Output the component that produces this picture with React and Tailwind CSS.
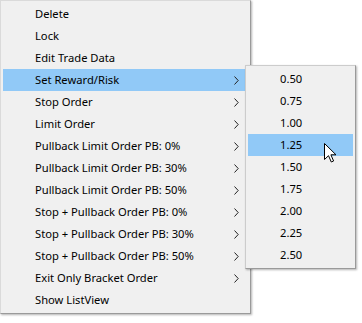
import React from 'react'

const mainItems = [
  { label: 'Delete' },
  { label: 'Lock' },
  { label: 'Edit Trade Data' },
  { label: 'Set Reward/Risk', sub: true, active: true },
  { label: 'Stop Order', sub: true },
  { label: 'Limit Order', sub: true },
  { label: 'Pullback Limit Order PB: 0%', sub: true },
  { label: 'Pullback Limit Order PB: 30%', sub: true },
  { label: 'Pullback Limit Order PB: 50%', sub: true },
  { label: 'Stop + Pullback Order PB: 0%', sub: true },
  { label: 'Stop + Pullback Order PB: 30%', sub: true },
  { label: 'Stop + Pullback Order PB: 50%', sub: true },
  { label: 'Exit Only Bracket Order', sub: true },
  { label: 'Show ListView' },
]

const ratios = ['0.50', '0.75', '1.00', '1.25', '1.50', '1.75', '2.00', '2.25', '2.50']

function Chevron() {
  return (
    <svg width="5" height="9" viewBox="0 0 5 9" className="shrink-0">
      <path d="M0.5 0.5 L4.2 4.5 L0.5 8.5" fill="none" stroke="#222" strokeWidth="1" />
    </svg>
  )
}

function Cursor() {
  return (
    <svg width="13" height="20" viewBox="0 0 13 20" className="absolute left-[324px] top-[143px]">
      <path
        d="M0.5 0.5 L0.5 16.5 L4.5 12.7 L7.3 19 L9.6 18 L6.9 11.8 L12 11.8 Z"
        fill="#fff"
        stroke="#000"
        strokeWidth="1"
        strokeLinejoin="round"
      />
    </svg>
  )
}

export default function App() {
  return (
    <div
      className="relative w-[362px] h-[323px] bg-white text-black text-[11.2px] overflow-hidden"
      style={{ fontFamily: '"Segoe UI", "Noto Sans", sans-serif' }}
    >
      <div className="w-[251px] bg-[#f0f0f0] border border-[#dadada] border-r-[#9a9a9a] border-b-[#9a9a9a] p-[2px] shadow-[1px_1px_2px_rgba(0,0,0,0.3)]">
        {mainItems.map((item) => (
          <div
            key={item.label}
            className={`h-[22px] flex items-center pl-[32px] pr-[9px] ${item.active ? 'bg-[#91c9f7]' : ''}`}
          >
            <span className="flex-1 whitespace-nowrap">{item.label}</span>
            {item.sub && <Chevron />}
          </div>
        ))}
      </div>

      <div className="absolute left-[245px] top-[65px] w-[111px] bg-[#f0f0f0] border border-[#cccccc] border-r-[#9a9a9a] border-b-[#9a9a9a] p-[2px] shadow-[1px_1px_2px_rgba(0,0,0,0.3)]">
        {ratios.map((r) => (
          <div
            key={r}
            className={`h-[22px] flex items-center pl-[32px] ${r === '1.25' ? 'bg-[#91c9f7]' : ''}`}
          >
            {r}
          </div>
        ))}
      </div>

      <Cursor />
    </div>
  )
}
